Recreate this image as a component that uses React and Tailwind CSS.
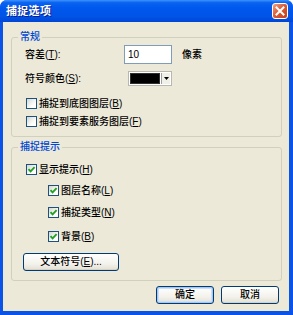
import React from "react";

const FONT = "[font-family:'Liberation_Sans','Noto_Sans_CJK_SC',sans-serif]";

function Acc({ k, dots }) {
  return (
    <span>
      (<span className="underline underline-offset-1">{k}</span>){dots}
    </span>
  );
}

function Check({ checked }) {
  return (
    <span className="flex h-[11px] w-[11px] shrink-0 items-center justify-center border border-[#1c5180] bg-[linear-gradient(135deg,#d6d6ce,#ffffff_70%)]">
      {checked && (
        <svg width="9" height="9" viewBox="0 0 9 9">
          <path d="M1.5 4.2 L3.6 6.4 L7.6 2.2" fill="none" stroke="#21a121" strokeWidth="1.9" />
        </svg>
      )}
    </span>
  );
}

function CheckRow({ checked, label, k, className }) {
  return (
    <div className={`flex h-[13px] items-center gap-[2px] ${className}`}>
      <Check checked={checked} />
      <span className="leading-[13px]">
        {label}
        <Acc k={k} />
      </span>
    </div>
  );
}

function XPButton({ children, def, className }) {
  return (
    <div
      className={`flex h-[18px] items-center justify-center rounded-[3px] border border-[#003c74] bg-[linear-gradient(to_bottom,#ffffff,#f3f2ec_60%,#e3dfd3)] leading-none ${
        def ? "shadow-[inset_0_0_0_1px_#a8c6f2,inset_0_0_0_2px_#cfdff7]" : "shadow-[inset_0_-1px_0_#d6d0c5]"
      } ${className}`}
    >
      {children}
    </div>
  );
}

export default function App() {
  return (
    <div className={`flex h-[315px] w-[293px] flex-col overflow-hidden rounded-t-[7px] bg-[#0b52e6] text-[10px] font-medium text-black ${FONT}`}>
      {/* title bar */}
      <div className="flex h-[22px] shrink-0 items-center justify-between bg-[linear-gradient(to_bottom,#3d93ff_0%,#0a63f0_12%,#0058ee_35%,#0054e6_75%,#0045d6_100%)] pl-[6px] pr-[5px]">
        <span className="text-[11px] font-bold tracking-[0.3px] text-white [text-shadow:1px_1px_#0a1a8c]">捕捉选项</span>
        <div className="flex h-[16px] w-[16px] items-center justify-center rounded-[3px] border border-white bg-[linear-gradient(135deg,#f0a088,#d9582f_50%,#c2401c)]">
          <svg width="10" height="10" viewBox="0 0 10 10">
            <path d="M1.5 1.5 L8.5 8.5 M8.5 1.5 L1.5 8.5" stroke="white" strokeWidth="2" strokeLinecap="square" />
          </svg>
        </div>
      </div>

      {/* client */}
      <div className="ml-[3px] mr-[4px] flex h-[289px] w-[286px] shrink-0 flex-col bg-[#ece9d8] pl-[8px] pr-[7px]">
        {/* group 1 */}
        <div className="mt-[15px] flex h-[100px] shrink-0 flex-col rounded-[3px] border border-[#d0d0bf]">
          <div className="-mt-[7px] ml-[6px] h-[12px] w-fit bg-[#ece9d8] px-[2px] leading-[12px] text-[#0046d5]">常规</div>
          <div className="mt-[2px] flex h-[19px] items-center pl-[13px]">
            <span className="w-[99px]">
              容差<Acc k="T" />:
            </span>
            <div className="flex h-[19px] w-[48px] items-center border border-[#7f9db9] bg-white pl-[3px]">10</div>
            <span className="ml-[10px]">像素</span>
          </div>
          <div className="mt-[7px] flex h-[15px] items-center pl-[13px]">
            <span className="w-[103px]">
              符号颜色<Acc k="S" />:
            </span>
            <div className="flex h-[15px] w-[44px] items-stretch border border-[#b8b8b0] bg-white p-[1px]">
              <div className="flex-1 border border-[#303030] bg-black" />
              <div className="ml-[1px] flex w-[9px] items-center justify-center border-l border-[#a0a0a0] bg-[#f0efe8]">
                <svg width="5" height="3" viewBox="0 0 5 3">
                  <path d="M0 0 H5 L2.5 3 Z" fill="black" />
                </svg>
              </div>
            </div>
          </div>
          <CheckRow className="ml-[14px] mt-[11px]" label="捕捉到底图图层" k="B" />
          <CheckRow className="ml-[14px] mt-[5px]" label="捕捉到要素服务图层" k="F" />
        </div>

        {/* group 2 */}
        <div className="mt-[10px] flex h-[134px] shrink-0 flex-col rounded-[3px] border border-[#d0d0bf]">
          <div className="-mt-[7px] ml-[6px] h-[12px] w-fit bg-[#ece9d8] px-[2px] leading-[12px] text-[#0046d5]">捕捉提示</div>
          <CheckRow className="ml-[14px] mt-[10px]" checked label="显示提示" k="H" />
          <CheckRow className="ml-[36px] mt-[8px]" checked label="图层名称" k="L" />
          <CheckRow className="ml-[36px] mt-[9px]" checked label="捕捉类型" k="N" />
          <CheckRow className="ml-[36px] mt-[11px]" checked label="背景" k="B" />
          <XPButton className="ml-[11px] mt-[10px] w-[96px]">
            文本符号<Acc k="E" dots="..." />
          </XPButton>
        </div>

        {/* buttons */}
        <div className="mr-[3px] mt-[5px] flex justify-end gap-[7px]">
          <XPButton def className="w-[58px]">确定</XPButton>
          <XPButton className="w-[58px]">取消</XPButton>
        </div>
      </div>
    </div>
  );
}
